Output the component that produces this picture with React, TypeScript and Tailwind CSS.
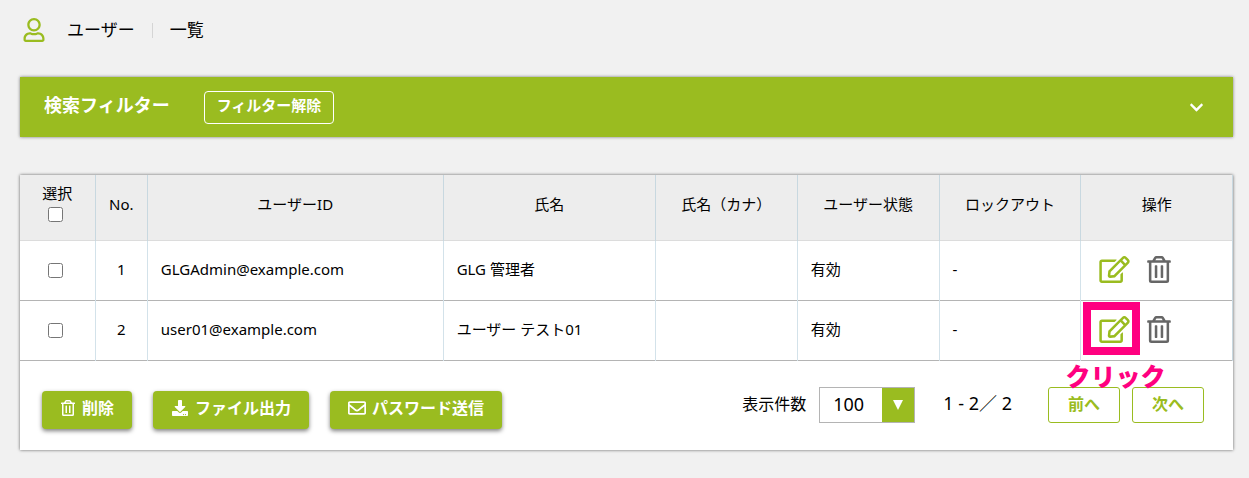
import React from 'react';
import {
  FaChevronDown,
  FaDownload,
  FaRegEdit,
  FaRegEnvelope,
  FaRegTrashAlt,
  FaRegUser,
} from 'react-icons/fa';

type User = {
  no: number;
  id: string;
  name: string;
  kana: string;
  status: string;
  lockout: string;
};

const users: User[] = [
  { no: 1, id: 'GLGAdmin@example.com', name: 'GLG 管理者', kana: '', status: '有効', lockout: '-' },
  { no: 2, id: 'user01@example.com', name: 'ユーザー テスト01', kana: '', status: '有効', lockout: '-' },
];

const headings = ['No.', 'ユーザーID', '氏名', '氏名（カナ）', 'ユーザー状態', 'ロックアウト', '操作'];

const cell = 'border-r border-[#d3e2ea] px-[13px] pb-0.5';

function ActionButton({ icon, label }: { icon: React.ReactNode; label: string }) {
  return (
    <button
      type="button"
      className="flex h-[38px] items-center gap-1.5 rounded bg-[#9abc20] px-[18px] pb-1 text-[16px] leading-6 font-bold text-white shadow-[0_2px_4px_rgba(0,0,0,0.5)]"
    >
      {icon}
      {label}
    </button>
  );
}

function PageButton({ label }: { label: string }) {
  return (
    <button
      type="button"
      className="h-9 w-[72px] rounded-[3px] border border-[#9abc20] bg-white pb-0.5 text-[16px] leading-6 font-bold text-[#9abc20]"
    >
      {label}
    </button>
  );
}

function Callout() {
  return (
    <span className="pointer-events-none absolute -top-[14px] -left-4 h-[53px] w-[57px] border-8 border-[#ff0080]">
      <span className="absolute top-[48px] left-6 -translate-x-1/2 text-[25px] leading-[36px] font-black whitespace-nowrap text-[#ff0080]">
        クリック
      </span>
    </span>
  );
}

export default function App() {
  return (
    <div className="min-h-screen bg-[#f1f1f1] pr-4 pb-7 pl-5 font-['Noto_Sans','Noto_Sans_CJK_JP',sans-serif] text-[15px] leading-6 text-black">
      <header className="flex h-[77px] items-start px-[3px] pt-[18px]">
        <FaRegUser className="h-6 w-[22px] text-[#9abc20]" />
        <h1 className="ml-[22px] flex items-center text-[17px] leading-6">
          <span>ユーザー</span>
          <span className="mx-[17px] h-[15px] w-px bg-[#d5d5d5]" />
          <span>一覧</span>
        </h1>
      </header>

      <section className="flex h-[60px] items-center bg-[#9abc20] px-6 text-white shadow-[0_0_3px_rgba(0,0,0,0.5)]">
        <h2 className="pb-1 text-[18px] leading-6 font-bold">検索フィルター</h2>
        <button
          type="button"
          className="ml-[34px] h-[33px] rounded border border-white px-3 pb-1 text-[15px] leading-6 font-bold"
        >
          フィルター解除
        </button>
        <button type="button" aria-label="検索フィルターを開く" className="ml-auto px-[5px]">
          <FaChevronDown className="size-[15px]" />
        </button>
      </section>

      <main className="mt-[38px] bg-white shadow-[0_0_3px_rgba(0,0,0,0.6)]">
        <table className="w-full table-fixed border-collapse">
          <colgroup>
            <col className="w-[6.2%]" />
            <col className="w-[4.3%]" />
            <col className="w-[24.4%]" />
            <col className="w-[17.5%]" />
            <col className="w-[11.7%]" />
            <col className="w-[11.7%]" />
            <col className="w-[11.7%]" />
            <col />
          </colgroup>
          <thead>
            <tr className="h-[65px] border-b border-[#dcdcdc] bg-[#ededed]">
              <th className="border-r border-[#c8d8e0] pb-2.5 font-normal">
                <label className="flex flex-col items-center gap-1 leading-5">
                  選択
                  <input type="checkbox" className="mr-[3px] size-[15px]" />
                </label>
              </th>
              {headings.map((heading) => (
                <th key={heading} className="border-r border-[#c8d8e0] pb-1.5 font-normal">
                  {heading}
                </th>
              ))}
            </tr>
          </thead>
          <tbody>
            {users.map((user) => (
              <tr key={user.no} className="h-[60px] border-b border-[#b4b4b4]">
                <td className="border-r border-[#d3e2ea] pr-[3px]">
                  <input
                    type="checkbox"
                    aria-label={`${user.id} を選択`}
                    className="mx-auto block size-[15px]"
                  />
                </td>
                <td className="border-r border-[#d3e2ea] pb-0.5 text-center">{user.no}</td>
                <td className={cell}>{user.id}</td>
                <td className={cell}>{user.name}</td>
                <td className={cell}>{user.kana}</td>
                <td className={cell}>{user.status}</td>
                <td className={cell}>{user.lockout}</td>
                <td className="border-r border-[#c8d8e0] pb-0.5 pl-[18px]">
                  <div className="flex items-center gap-[17px]">
                    <span className="relative">
                      <button type="button" aria-label="編集" className="block text-[#9abc20]">
                        <FaRegEdit className="h-[27px] w-[31px]" />
                      </button>
                      {user.no === 2 && <Callout />}
                    </span>
                    <button type="button" aria-label="削除" className="block text-[#666]">
                      <FaRegTrashAlt className="h-[27px] w-6" />
                    </button>
                  </div>
                </td>
              </tr>
            ))}
          </tbody>
        </table>

        <footer className="flex h-[89px] items-start justify-between pt-[26px] pr-[29px] pl-[22px]">
          <div className="flex gap-[21px] pt-1">
            <ActionButton icon={<FaRegTrashAlt className="size-4" />} label="削除" />
            <ActionButton icon={<FaDownload className="h-4 w-[18px]" />} label="ファイル出力" />
            <ActionButton icon={<FaRegEnvelope className="h-[18px] w-[18px]" />} label="パスワード送信" />
          </div>
          <div className="flex items-center text-[16px]">
            <label htmlFor="page-size" className="pb-0.5">
              表示件数
            </label>
            <div className="relative ml-[13px] flex">
              <select
                id="page-size"
                defaultValue="100"
                className="h-9 w-24 appearance-none border border-[#b4b4b4] bg-white pb-0.5 pl-[13px] text-[18px]"
              >
                <option>50</option>
                <option>100</option>
              </select>
              <span className="pointer-events-none absolute inset-y-px right-px flex w-8 items-center justify-center bg-[#9abc20] text-white">
                <svg viewBox="0 0 10 10" className="size-2.5" fill="currentColor" aria-hidden="true">
                  <path d="M0 0h10L5 10z" />
                </svg>
              </span>
            </div>
            <span className="ml-7 pb-1 text-[18px]">1 - 2／ 2</span>
            <div className="ml-9 flex gap-3">
              <PageButton label="前へ" />
              <PageButton label="次へ" />
            </div>
          </div>
        </footer>
      </main>
    </div>
  );
}
